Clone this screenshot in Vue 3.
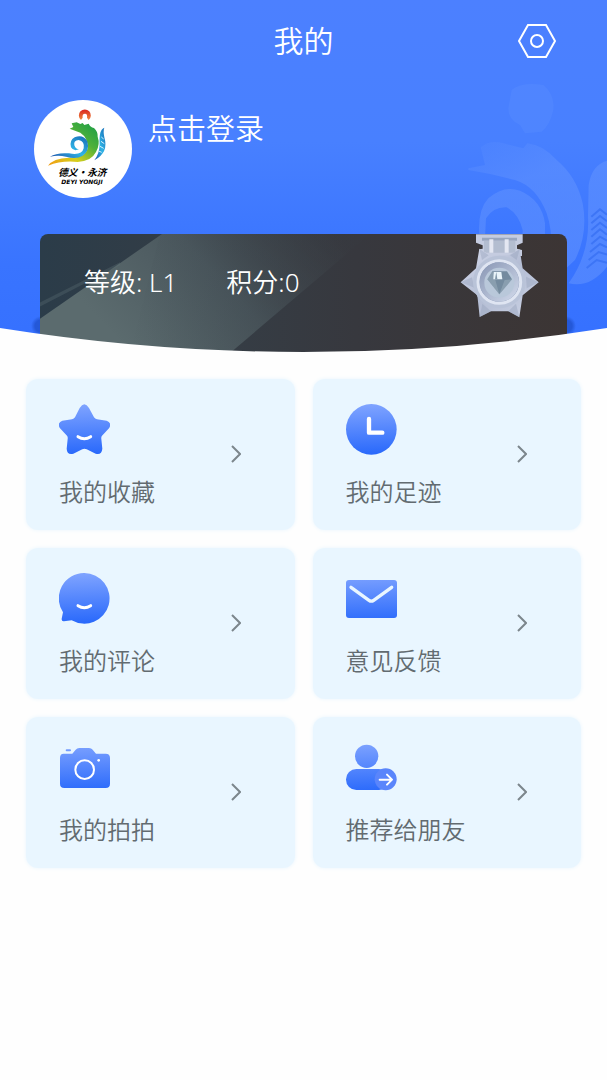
<script setup>
import { ref } from 'vue'

const level = ref('L1')
const points = ref(0)

const menus = [
  { icon: 'star', label: '我的收藏' },
  { icon: 'clock', label: '我的足迹' },
  { icon: 'comment', label: '我的评论' },
  { icon: 'mail', label: '意见反馈' },
  { icon: 'camera', label: '我的拍拍' },
  { icon: 'share', label: '推荐给朋友' },
]
</script>

<template>
  <div class="page">
    <header class="header">
      <svg class="decor" viewBox="0 0 501 680" aria-hidden="true">
        <defs>
          <linearGradient id="decor-fill" gradientUnits="userSpaceOnUse" x1="150" y1="200" x2="300" y2="560">
            <stop offset="0" stop-color="#6b9aff" stop-opacity="0.1" />
            <stop offset="0.4" stop-color="#6b9aff" stop-opacity="0.4" />
            <stop offset="1" stop-color="#6b9aff" stop-opacity="0.45" />
          </linearGradient>
        </defs>
        <g fill="url(#decor-fill)">
          <path d="M215 60Q245 35 310 45Q345 75 340 120Q330 165 305 185L255 190L240 165Q205 150 205 115Z" fill="#6b9aff" fill-opacity="0.2" />
          <path d="M85 295L135 285L122 232Q150 208 190 220L250 235L262 220Q310 225 350 270Q410 320 428 400Q445 490 405 570L330 640Q345 500 320 430Q290 350 225 330Q160 312 85 300Z" />
          <path d="M118 500Q112 420 145 385Q190 345 240 362Q305 390 315 460L315 600H245L248 480Q235 430 200 412Q160 410 138 445L135 500Z" />
          <path d="M501 272Q455 285 446 345L444 440Q450 550 386 640Q450 655 501 590Z" />
        </g>
        <path class="leaf" d="M454 440L480 418L501 434M454 460L480 438L501 454M454 480L480 458L501 474M454 500L480 478L501 494M454 522L480 500L501 512M450 546L480 522L501 532M446 570L476 546L501 554M440 594L470 570L501 578" />
      </svg>

      <div class="nav">
        <h1 class="title">我的</h1>
        <button class="settings" type="button" aria-label="设置">
          <svg viewBox="0 0 38 34" width="38" height="34">
            <path d="M10 1H28L37 17L28 33H10L1 17Z" />
            <circle cx="19" cy="17" r="6" />
          </svg>
        </button>
      </div>

      <div class="profile">
        <svg class="avatar" viewBox="27 27 294 294" role="img" aria-label="德义永济">
          <defs>
            <linearGradient id="sun" x1="0" y1="0" x2="0" y2="1">
              <stop offset="0" stop-color="#d9231c" />
              <stop offset="1" stop-color="#f08a3c" />
            </linearGradient>
            <linearGradient id="wave" x1="0" y1="1" x2="1" y2="0">
              <stop offset="0" stop-color="#1f4fa8" />
              <stop offset="0.5" stop-color="#2fb4e6" />
              <stop offset="1" stop-color="#1769b5" />
            </linearGradient>
            <linearGradient id="hill" x1="0" y1="1" x2="1" y2="0">
              <stop offset="0" stop-color="#f39a12" />
              <stop offset="0.35" stop-color="#d5cf1d" />
              <stop offset="0.65" stop-color="#4fb13a" />
              <stop offset="1" stop-color="#149a49" />
            </linearGradient>
          </defs>
          <circle cx="174" cy="174" r="147" fill="#fff" />
          <path fill="url(#sun)" d="M168 87A18 18 0 1 1 191 87L186 80Q188 68 180 68Q171 68 173 80Z" />
          <path fill="url(#hill)" d="M134 113L145 108L140 97L155 94L166 99L173 96L178 102L191 98Q195 108 207 111Q219 122 218 137Q226 160 213 183Q199 211 158 213Q110 208 69 224Q84 202 132 200Q181 202 188 172Q190 141 166 125Z" />
          <path fill="url(#wave)" d="M75 197Q95 184 132 187Q171 194 176 172Q180 151 161 147Q145 148 148 163Q152 175 162 175Q145 182 138 169Q132 149 149 139Q174 129 187 151Q195 180 173 194Q154 206 123 197Q100 191 75 197Z" />
          <path fill="url(#wave)" d="M238 110Q234 120 238 139Q252 185 208 208Q223 188 224 161Q221 115 238 110Z" />
          <path fill="none" stroke="#d8f4ff" stroke-width="3" d="M229 138L236 144M228 151L238 158M225 166L236 172M221 180L230 184" />
          <text class="logo-name" x="172" y="255">德义·永济</text>
          <text class="logo-pinyin" x="171" y="279">DEYI YONGJI</text>
        </svg>
        <button class="login" type="button">点击登录</button>
      </div>

      <section class="level-card">
        <svg class="texture" viewBox="0 0 527 118" preserveAspectRatio="none" aria-hidden="true">
          <defs>
            <linearGradient id="sheen" gradientUnits="userSpaceOnUse" x1="90" y1="118" x2="260" y2="-40">
              <stop offset="0" stop-color="#5b6b6e" />
              <stop offset="0.5" stop-color="#4b585e" />
              <stop offset="1" stop-color="#454c51" stop-opacity="0" />
            </linearGradient>
            <linearGradient id="shade" x1="0" y1="0" x2="1" y2="0">
              <stop offset="0" stop-color="#38424a" stop-opacity="0" />
              <stop offset="1" stop-color="#37393f" />
            </linearGradient>
          </defs>
          <path d="M0 84L122 0H330L190 118H0Z" fill="url(#sheen)" />
          <path d="M120 0H330L190 118H90Z" fill="url(#shade)" fill-opacity="0.5" />
          <path d="M0 68L80 28V31L0 72Z" fill="#65767b" fill-opacity="0.3" />
        </svg>
        <p class="stat">等级: {{ level }}</p>
        <p class="stat">积分:{{ points }}</p>
        <svg class="medal" viewBox="60 44 237 252" aria-hidden="true">
          <defs>
            <linearGradient id="silver" x1="0" y1="0" x2="1" y2="1">
              <stop offset="0" stop-color="#d5daec" />
              <stop offset="0.5" stop-color="#b4bdd4" />
              <stop offset="1" stop-color="#cdd4e6" />
            </linearGradient>
            <linearGradient id="ring" x1="0" y1="0" x2="1" y2="1">
              <stop offset="0" stop-color="#8795b3" />
              <stop offset="1" stop-color="#d3dbec" />
            </linearGradient>
          </defs>
          <path fill="#c5cce0" d="M108 45H248V70L231 78V88L246 92V110H118V90L128 88V78L108 70Z" />
          <path fill="#99a6be" d="M126 55H231V64H126Z" />
          <path fill="#b3bdd0" d="M132 64H226V100H132Z" />
          <path fill="#e4e7f2" d="M148 60H160V100H148ZM194 60H206V100H194Z" />
          <path fill="url(#silver)" d="M118 88L150 108H206L239 90L248 147L296 189L248 228L238 294L205 276H153L119 293L112 228L62 189L108 147Z" />
          <path fill="#939fba" fill-opacity="0.4" d="M62 189L96 174L103 205ZM296 189L258 172L260 207ZM119 293L127 253L153 276ZM238 294L228 253L205 276ZM118 88L126 122L146 108ZM239 90L230 122L210 108Z" />
          <circle cx="178" cy="188" r="79" fill="#b9c3d8" />
          <circle cx="178" cy="188" r="64" fill="#8f9dba" stroke="#dfe5f2" stroke-width="9" />
          <circle cx="178" cy="188" r="59" fill="url(#ring)" />
          <circle cx="178" cy="190" r="45" fill="#b9c8da" />
          <path fill="#748b9f" d="M157 156H201L216 180L178 225L142 180Z" />
          <path fill="#a9bbc9" d="M157 156L166 182L178 225L142 180ZM178 225L194 182L216 180Z" fill-opacity="0.4" />
          <path fill="#e9f4f9" d="M161 158H184L187 180H160Z" />
          <path fill="#8197a9" d="M169 158L172 180H165Z" />
        </svg>
      </section>

      <svg class="curve" viewBox="0 0 607 25" preserveAspectRatio="none" aria-hidden="true">
        <path d="M0 0Q303 48 607 0V25H0Z" />
      </svg>
    </header>

    <nav class="menu">
      <a v-for="item in menus" :key="item.icon" class="menu-card" href="#">
        <span class="menu-main">
          <svg class="icon" viewBox="0 0 153 153" aria-hidden="true">
            <defs>
              <linearGradient :id="'fill-' + item.icon" gradientUnits="userSpaceOnUse" x1="70" y1="0" x2="76" y2="153">
                <stop offset="0" stop-color="#80a4ff" />
                <stop offset="1" stop-color="#2868fb" />
              </linearGradient>
            </defs>
            <g :fill="`url(#fill-${item.icon})`">
              <template v-if="item.icon === 'star'">
                <path d="M62 12Q76 -10 90 12L105 40Q108 45 114 46L143 50Q160 57 150 73L129 95Q126 99 127 105L130 134Q128 154 110 149L83 136Q76 133 70 136L43 149Q24 154 23 134L26 105Q27 99 24 95L3 73Q-7 57 10 50L39 46Q45 45 48 40Z" />
                <path class="smile" d="M57 98Q76 110 95 98" />
              </template>
              <template v-else-if="item.icon === 'clock'">
                <circle cx="76" cy="76" r="76" />
                <path class="hand" d="M69 45V86H109" />
              </template>
              <template v-else-if="item.icon === 'comment'">
                <path d="M76 0A76 76 0 1 1 38 142L15 145Q7 146 8 137L12 118A76 76 0 0 1 76 0Z" />
                <path class="smile" d="M57 98Q76 110 95 98" />
              </template>
              <template v-else-if="item.icon === 'mail'">
                <rect y="21" width="153" height="114" rx="9" />
                <path class="flap" d="M15 43L69 82Q76 87 83 82L137 43" />
              </template>
              <template v-else-if="item.icon === 'camera'">
                <path d="M14 35H40L50 23Q54 18 61 18H90Q97 18 101 23L111 35H140Q153 35 153 48V125Q153 138 140 138H16Q3 138 3 125V48Q3 35 14 35Z" />
                <rect x="20" y="22" width="16" height="6" rx="3" />
                <circle class="lens" cx="77" cy="83" r="28" />
                <circle cx="119" cy="55" r="4" fill="#fff" />
              </template>
              <template v-else>
                <circle cx="62" cy="43" r="35" />
                <rect y="81" width="130" height="63" rx="31" />
                <circle cx="119" cy="112" r="33" fill="#5a85fb" />
                <path class="arrow" d="M101 113H137M123 98L138 113L123 128" />
              </template>
            </g>
          </svg>
          <span class="label">{{ item.label }}</span>
        </span>
        <svg class="chevron" viewBox="0 0 10 18" width="10" height="18" aria-hidden="true">
          <path d="M1 1L9 9L1 17" />
        </svg>
      </a>
    </nav>
  </div>
</template>

<style>
body {
  margin: 0;
  background: #fefefe;
}
</style>

<style scoped>
.page {
  min-height: 100vh;
  font-family: "Noto Sans", "Noto Sans CJK SC", sans-serif;
  font-weight: 350;
  background: #fefefe;
}

.header {
  position: relative;
  overflow: hidden;
  color: #fff;
  background:
    radial-gradient(circle 10px at 41px 326px, #2458d8 60%, transparent),
    radial-gradient(circle 10px at calc(100% - 41px) 326px, #2458d8 60%, transparent),
    linear-gradient(#4c80ff, #4880ff 40%, #3974ff 75%, #3570ff);
}

.decor {
  position: absolute;
  top: 70px;
  right: 0;
  width: 167px;
}

.leaf {
  fill: none;
  stroke: #3d75f6;
  stroke-width: 6;
}

.nav {
  position: relative;
  display: grid;
  grid-template-columns: 1fr auto 1fr;
  align-items: center;
  height: 81px;
  padding: 0 51px;
}

.title {
  grid-column: 2;
  margin: 0;
  font-size: 30px;
  font-weight: 350;
  line-height: 40px;
}

.settings,
.login {
  padding: 0;
  border: 0;
  color: inherit;
  background: none;
  font: inherit;
  cursor: pointer;
}

.settings {
  display: flex;
  justify-self: end;
}

.settings svg {
  fill: none;
  stroke: #fff;
  stroke-width: 2;
}

.profile {
  position: relative;
  display: flex;
  align-items: flex-start;
  gap: 16px;
  padding: 19px 34px 0;
}

.avatar {
  width: 98px;
  height: 98px;
}

.logo-name {
  font: italic 700 29px "Noto Sans CJK SC", sans-serif;
  text-anchor: middle;
}

.logo-pinyin {
  font: italic 700 18px "DejaVu Sans", sans-serif;
  text-anchor: middle;
}

.login {
  margin-top: 8px;
  font-size: 29px;
  line-height: 42px;
}

.level-card {
  position: relative;
  display: flex;
  height: 119px;
  margin: 36px 40px 0;
  padding: 0 28px 0 44px;
  overflow: hidden;
  box-sizing: border-box;
  border-radius: 8px 8px 0 0;
  background: linear-gradient(90deg, #2b3c49, #353d45 35%, #37383e 60%, #3c3534);
}

.texture {
  position: absolute;
  inset: 0;
  width: 100%;
  height: 100%;
}

.stat {
  position: relative;
  margin: 29px 49px 0 0;
  font-size: 26px;
  line-height: 38px;
  white-space: nowrap;
}

.medal {
  position: relative;
  width: 79px;
  height: 84px;
  margin-left: auto;
}

.curve {
  position: absolute;
  bottom: 0;
  left: 0;
  width: 100%;
  height: 25px;
  fill: #fefefe;
}

.menu {
  display: grid;
  grid-template-columns: 1fr 1fr;
  gap: 18px;
  padding: 26px;
}

.menu-card {
  display: flex;
  align-items: flex-start;
  justify-content: space-between;
  padding: 25px 54px 19px 33px;
  border-radius: 12px;
  color: #626b70;
  background: #e9f6ff;
  box-shadow: 0 0 4px #e9f6ff;
  text-decoration: none;
}

.menu-main {
  display: flex;
  flex-direction: column;
  gap: 18px;
}

.icon {
  width: 51px;
  height: 51px;
}

.label {
  font-size: 24px;
  line-height: 38px;
  white-space: nowrap;
}

.chevron {
  flex: none;
  margin-top: 41px;
  fill: none;
  stroke: #7c868c;
  stroke-width: 2;
}

.smile,
.hand,
.flap,
.lens,
.arrow {
  fill: none;
  stroke: #fff;
  stroke-width: 9;
  stroke-linecap: round;
  stroke-linejoin: round;
}

.hand {
  stroke-width: 13;
}

.flap {
  stroke: #e9f6ff;
  stroke-width: 10;
}

.lens,
.arrow {
  stroke-width: 6;
}
</style>
